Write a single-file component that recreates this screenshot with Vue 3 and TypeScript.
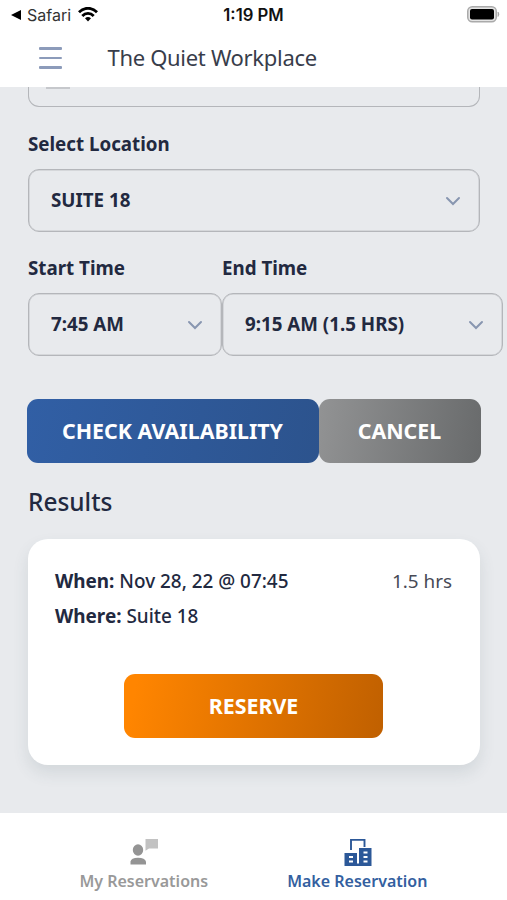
<script setup lang="ts">
import { ref } from 'vue'

interface Tab {
  id: 'list' | 'make'
  label: string
}

const tabs: Tab[] = [
  { id: 'list', label: 'My Reservations' },
  { id: 'make', label: 'Make Reservation' },
]
const activeTab = ref<Tab['id']>('make')

const location = 'SUITE 18'
const startTime = '7:45 AM'
const endTime = '9:15 AM (1.5 HRS)'
</script>

<template>
  <div class="screen">
    <div class="status">
      <div class="back">
        <svg width="10" height="10" viewBox="0 0 10 10"><path d="M0 5 10 0V10Z" fill="#000" /></svg>
        <span class="safari">Safari</span>
        <svg class="wifi" width="20" height="15" viewBox="0 0 20 15" fill="none" stroke="#000" stroke-width="2.8">
          <path d="M1 5.3C6-.1 14-.1 19 5.3" />
          <path d="M4.3 9C7.5 5.6 12.500 5.600 15.700 9" />
          <path d="M7 11.200Q10 8.700 13 11.200L10 14.500Z" fill="#000" stroke="none" />
        </svg>
      </div>
      <span class="clock">1:19 PM</span>
      <svg class="battery" width="33" height="17" viewBox="0 0 33 17">
        <rect x=".75" y=".75" width="28.500" height="15" rx="4.500" fill="#e4e4e4" stroke="#aaa" stroke-width="1.500" />
        <rect x="3" y="3" width="24" height="10.500" rx="2" fill="#000" />
        <path d="M31 6Q32.800 8.200 31 10.500Z" fill="#999" stroke="#999" stroke-width=".6" />
      </svg>
    </div>

    <header class="header">
      <button class="menu" aria-label="Menu"><i /><i /><i /></button>
      <h1 class="title">The Quiet Workplace</h1>
    </header>

    <main class="content">
      <div class="field field-clipped"><i class="stub" /></div>

      <label class="label">Select Location</label>
      <div class="field">
        <span class="value">{{ location }}</span>
        <svg class="chevron" width="16" height="10" viewBox="0 0 16 10"><path d="M2 2 8 8 14 2" /></svg>
      </div>

      <div class="times">
        <div class="start">
          <label class="label">Start Time</label>
          <div class="field">
            <span class="value">{{ startTime }}</span>
            <svg class="chevron" width="16" height="10" viewBox="0 0 16 10"><path d="M2 2 8 8 14 2" /></svg>
          </div>
        </div>
        <div class="end">
          <label class="label">End Time</label>
          <div class="field">
            <span class="value">{{ endTime }}</span>
            <svg class="chevron" width="16" height="10" viewBox="0 0 16 10"><path d="M2 2 8 8 14 2" /></svg>
          </div>
        </div>
      </div>

      <div class="actions">
        <button class="btn check">CHECK AVAILABILITY</button>
        <button class="btn cancel">CANCEL</button>
      </div>

      <h2 class="results">Results</h2>

      <section class="card">
        <div class="row">
          <span class="when"><b>When:</b> Nov 28, 22 @ 07:45</span>
          <span class="hours">1.5 hrs</span>
        </div>
        <div class="row"><span class="where"><b>Where:</b> Suite 18</span></div>
        <button class="btn reserve">RESERVE</button>
      </section>
    </main>

    <nav class="tabs">
      <button
        v-for="tab in tabs"
        :key="tab.id"
        class="tab"
        :class="[tab.id, { active: tab.id === activeTab }]"
        @click="activeTab = tab.id"
      >
        <svg v-if="tab.id === 'list'" width="28" height="28" viewBox="0 0 28 28">
          <path d="M15.500 1H28V10.500H19L15.500 12.800Z" fill="#c2c2c2" />
          <ellipse cx="8" cy="12" rx="5.200" ry="5.800" fill="#949494" />
          <path d="M.5 26.500V23.500Q1 19.700 8 19.700T16 23.500V26.500Z" fill="#949494" />
        </svg>
        <svg v-else width="28" height="28" viewBox="0 0 28 28">
          <path d="M7 12V1.900H20.500V9" fill="none" stroke="#2c5898" stroke-width="1.900" />
          <path fill="#2c5898" fill-rule="evenodd" d="M.5 15H13V25.500H15V10H27.500V28H.5ZM5 18V20H9V18ZM5 22.500V24.500H9V22.500ZM19.500 13.500V15.500H23.500V13.500ZM19.500 18V20H23.500V18ZM19.500 22.500V24.500H23.500V22.500Z" />
        </svg>
        <span>{{ tab.label }}</span>
      </button>
    </nav>
  </div>
</template>

<style>
body {
  margin: 0;
  overflow: hidden;
}
</style>

<style scoped>
.screen {
  display: flex;
  flex-direction: column;
  width: 507px;
  height: 900px;
  overflow: hidden;
  background: #fff;
  color: #222940;
  font-family: 'Noto Sans', sans-serif;
}
button {
  border: 0;
  padding: 0;
  background: none;
  font-family: inherit;
}
.status {
  display: grid;
  grid-template-columns: 1fr auto 1fr;
  align-items: center;
  height: 29px;
  padding: 0 7px 0 11px;
  box-sizing: border-box;
  color: #111;
  font-family: Inter, sans-serif;
}
.back {
  display: flex;
  align-items: center;
}
.safari {
  width: 44px;
  margin-left: 6px;
  font-size: 16px;
  color: #333;
  white-space: nowrap;
}
.wifi {
  margin-left: 6.5px;
}
.clock {
  margin-right: 4px;
  font-size: 16.7px;
  font-weight: 600;
}
.battery {
  justify-self: end;
}
.header {
  display: flex;
  align-items: center;
  height: 58px;
  padding-left: 38.5px;
}
.menu {
  display: flex;
  flex-direction: column;
  gap: 7px;
  width: 23px;
}
.menu i {
  height: 2.5px;
  border-radius: 1px;
  background: #8c9bba;
}
.title {
  margin: 0 0 2px 46px;
  font-size: 22px;
  font-weight: 400;
  letter-spacing: -0.31px;
  line-height: 30px;
  color: #383d4b;
}
.content {
  height: 726px;
  padding: 0 27px 0 28px;
  box-sizing: border-box;
  overflow: hidden;
  background: #e8eaed;
}
.field {
  display: flex;
  align-items: center;
  justify-content: space-between;
  height: 63px;
  padding: 0 18px 0 22px;
  box-sizing: border-box;
  border: 1.5px solid #b4b6ba;
  border-radius: 11px;
  box-shadow: inset 0 0 0 0.5px #c2c4c8;
}
.field-clipped {
  height: 20px;
  align-items: flex-start;
  border-top: 0;
  border-radius: 0 0 11px 11px;
  padding-left: 17px;
  box-shadow: none;
}
.stub {
  width: 24px;
  height: 2px;
  background: #c6c8cc;
}
.label {
  display: block;
  height: 24px;
  margin: 24px 0 13px;
  font-size: 18.75px;
  font-weight: 700;
  line-height: 24px;
  white-space: nowrap;
}
.field-clipped + .label {
  margin-top: 25px;
}
.value {
  margin-bottom: 2px;
  font-size: 18.75px;
  font-weight: 700;
  white-space: nowrap;
}
.chevron path {
  fill: none;
  stroke: #8896b0;
  stroke-width: 2;
  stroke-linecap: round;
}
.times {
  display: flex;
}
.start {
  flex: 0 0 194px;
}
.end {
  flex: 0 0 281px;
}
.actions {
  display: flex;
  margin: 43px -1px 0 -1px;
}
.btn {
  height: 64px;
  padding: 0 1px 2px 0;
  box-sizing: border-box;
  border-radius: 11px;
  color: #fff;
  font-size: 21.4px;
  font-weight: 700;
}
.check {
  width: 292px;
  background: linear-gradient(100deg, #315fa5, #2c538d);
}
.cancel {
  width: 162px;
  background: linear-gradient(100deg, #929394, #686a6b);
}
.results {
  margin: 22px 0 0;
  font-size: 24.4px;
  font-weight: 500;
  line-height: 34px;
}
.card {
  display: flex;
  flex-direction: column;
  height: 226px;
  margin-top: 20px;
  padding: 25px 28px 27px 27px;
  box-sizing: border-box;
  border-radius: 20px;
  background: #fff;
  box-shadow: 0 8px 16px rgba(60, 80, 90, 0.12);
}
.row {
  display: flex;
  justify-content: space-between;
  height: 35px;
  font-size: 18.9px;
  font-weight: 500;
  line-height: 34px;
  white-space: nowrap;
}
.row b {
  font-weight: 700;
}
.hours {
  color: #474a56;
  font-weight: 400;
}
.reserve {
  align-self: center;
  width: 259px;
  margin-top: auto;
  padding-right: 0;
  background: linear-gradient(100deg, #ff8500 5%, #c06000);
}
.tabs {
  display: flex;
  height: 87px;
  padding: 0 43px 0 37px;
  box-sizing: border-box;
}
.tab {
  display: flex;
  flex: 1;
  flex-direction: column;
  align-items: center;
  padding-top: 25px;
  color: #999;
  font-size: 16px;
  font-weight: 600;
  line-height: 24px;
  white-space: nowrap;
}
.tab svg {
  margin-left: 1px;
}
.tab span {
  margin-top: 3px;
}
.tab.active {
  color: #345f9f;
}
</style>
